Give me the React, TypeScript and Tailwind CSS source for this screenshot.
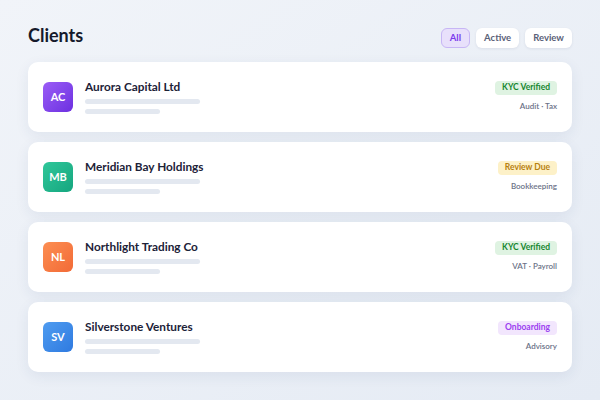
const clients = [
  {
    initials: 'AC',
    name: 'Aurora Capital Ltd',
    avatar: 'bg-gradient-to-br from-[#9b5cf6] to-[#6d2ee0]',
    badge: 'KYC Verified',
    badgeClass: 'bg-[#dff3e2] text-[#16862f]',
    services: 'Audit · Tax',
  },
  {
    initials: 'MB',
    name: 'Meridian Bay Holdings',
    avatar: 'bg-gradient-to-br from-[#2fc79a] to-[#14a67f]',
    badge: 'Review Due',
    badgeClass: 'bg-[#fdf1c8] text-[#b7800f]',
    services: 'Bookkeeping',
  },
  {
    initials: 'NL',
    name: 'Northlight Trading Co',
    avatar: 'bg-gradient-to-br from-[#fc8e52] to-[#f26a36]',
    badge: 'KYC Verified',
    badgeClass: 'bg-[#dff3e2] text-[#16862f]',
    services: 'VAT · Payroll',
  },
  {
    initials: 'SV',
    name: 'Silverstone Ventures',
    avatar: 'bg-gradient-to-br from-[#4f9cf0] to-[#2f7ae0]',
    badge: 'Onboarding',
    badgeClass: 'bg-[#f2e6fd] text-[#9b3ff0]',
    services: 'Advisory',
  },
]

const filters = ['All', 'Active', 'Review']

export default function App() {
  return (
    <div
      className="w-[600px] h-[400px] overflow-hidden bg-gradient-to-br from-[#f1f4f9] to-[#e5ebf4] px-[28px] pt-[26px]"
      style={{ fontFamily: 'Lato, "Noto Sans", sans-serif' }}
    >
      {/* Header */}
      <div className="flex items-center justify-between h-[24px]">
        <h1 className="-mt-[6px] text-[18px] font-bold text-[#151a2b] leading-none">Clients</h1>
        <div className="flex gap-[6px]">
          {filters.map((f, i) => (
            <button
              key={f}
              className={
                i === 0
                  ? 'h-[20px] px-[8px] rounded-[6px] border border-[#c7b6f5] bg-[#e8e0fb] text-[9.5px] font-bold text-[#7c3aed]'
                  : 'h-[20px] px-[8px] rounded-[6px] bg-white shadow-[0_1px_3px_rgba(30,41,80,0.08)] text-[9.5px] font-bold text-[#5a6178]'
              }
            >
              {f}
            </button>
          ))}
        </div>
      </div>

      {/* Client cards */}
      <div className="mt-[12px] flex flex-col gap-[10px]">
        {clients.map((c) => (
          <div
            key={c.initials}
            className="h-[70px] rounded-[10px] bg-white shadow-[0_4px_14px_rgba(40,60,110,0.08)] px-[15px] flex items-center justify-between"
          >
            <div className="flex items-center gap-[12px]">
              <div
                className={`w-[30px] h-[30px] rounded-[6px] ${c.avatar} flex items-center justify-center text-white text-[11px] font-bold`}
              >
                {c.initials}
              </div>
              <div className="flex flex-col -mt-[2px]">
                <div className="text-[11.8px] font-bold text-[#1c2238] leading-[16px]">{c.name}</div>
                <div className="mt-[4px] w-[115px] h-[5px] rounded-full bg-[#e3e8f0]" />
                <div className="mt-[5px] w-[75px] h-[5px] rounded-full bg-[#e3e8f0]" />
              </div>
            </div>
            <div className="flex flex-col items-end gap-[5px] -mt-[2px]">
              <span className={`px-[7px] h-[14px] flex items-center rounded-[4px] text-[8.5px] font-bold ${c.badgeClass}`}>
                {c.badge}
              </span>
              <span className="text-[8px] text-[#6b7287] font-semibold">{c.services}</span>
            </div>
          </div>
        ))}
      </div>
    </div>
  )
}
